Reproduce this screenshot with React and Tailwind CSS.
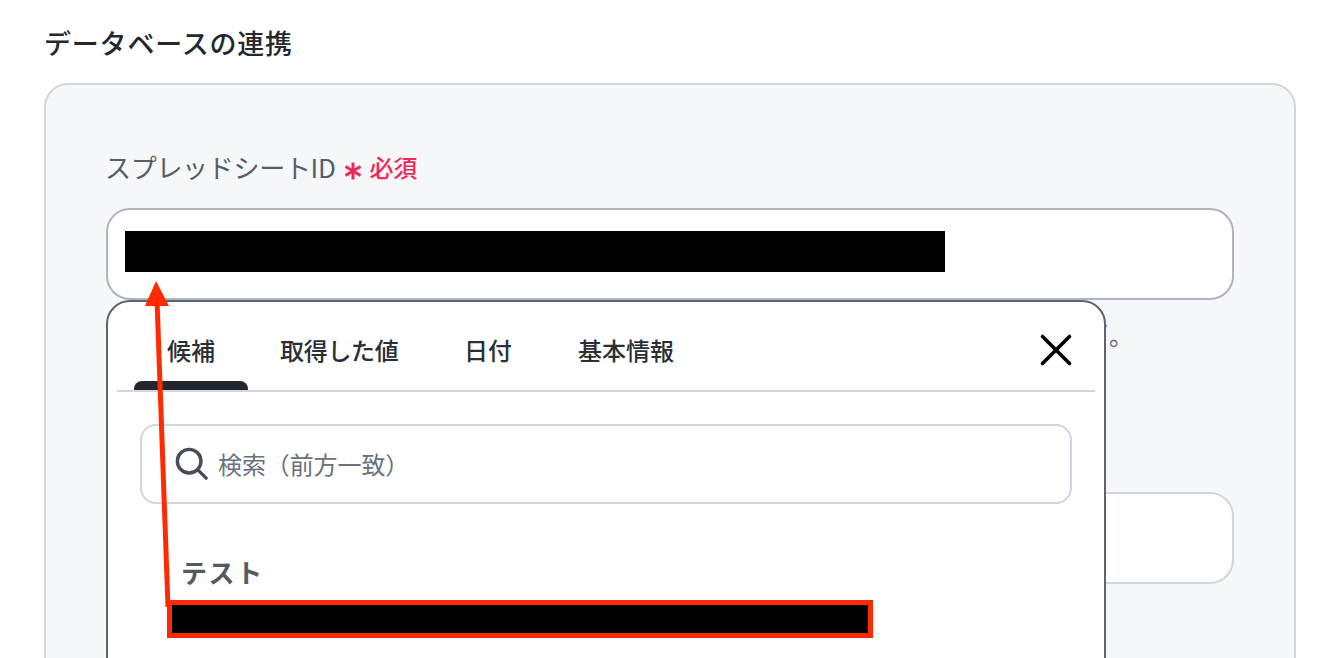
import React from 'react';
import { X } from 'lucide-react';

const font = "font-['Noto_Sans_CJK_JP','Noto_Sans',sans-serif]";

function Tab({ label, active, className }) {
  return (
    <div className={`relative h-[88px] whitespace-nowrap pt-[31px] text-center text-[24px] leading-[34px] font-medium text-[#2a2f36] ${className}`}>
      {label}
      {active && <div className="absolute bottom-0 left-0 right-0 h-[9px] rounded-t-[8px] bg-[#22262e]" />}
    </div>
  );
}

function Picker() {
  return (
    <div className="absolute left-[106px] top-[300px] z-10 h-[420px] w-[1000px] rounded-[24px] border-2 border-[#5b6470] bg-white px-[9px]">
      <div className="flex items-start border-b-2 border-[#d1d5de] pl-[17px]">
        <Tab label="候補" active className="w-[114px]" />
        <Tab label="取得した値" className="ml-[32px] w-[118px] tracking-[-0.3px]" />
        <Tab label="日付" className="ml-[66px] w-[47px]" />
        <Tab label="基本情報" className="ml-[66px] w-[98px]" />
        <button className="ml-auto mr-[12px] mt-[21px] text-black">
          <X size={54} strokeWidth={1.6} />
        </button>
      </div>
      <div className="px-[23px] pt-[32px]">
        <div className="flex h-[80px] items-center rounded-[16px] border-2 border-[#d1d5de] pl-[33px] text-[#69717d]">
          <svg width="34" height="34" viewBox="0 0 36 36" fill="none" stroke="#474d58" strokeWidth="3.6" strokeLinecap="round">
            <circle cx="15" cy="15" r="12.5" />
            <path d="M24.5 24.5 L33 33" />
          </svg>
          <span className="ml-[9px] text-[24px] tracking-[-0.1px]">検索（前方一致）</span>
        </div>
        <div className="pl-[41px] pt-[49px] text-[26px] leading-[38px] font-bold tracking-[1.6px] text-[#555a61]">テスト</div>
      </div>
    </div>
  );
}

export default function App() {
  return (
    <div className={`relative h-[658px] w-[1324px] overflow-hidden bg-white ${font}`}>
      <div className="px-[44px] pt-[24px]">
        <h2 className="text-[27px] leading-[38px] font-medium tracking-[0.8px] text-[#23282f]">データベースの連携</h2>
        <div className="mt-[21px] h-[700px] w-[1252px] rounded-[24px] border-2 border-[#d1d5de] bg-[#f6f7f9] px-[60px] pt-[63px]">
          <div className="flex h-[38px] items-center text-[26px] leading-[36px] tracking-[-0.3px] text-[#555d6a] -ml-[1px]">
            スプレッドシートID
            <svg className="ml-[8px] mt-[8px]" width="18" height="18" viewBox="0 0 18 18" stroke="#f0295b" strokeWidth="3">
              <path d="M9 0.5 V17.5 M1.5 4.5 L16.5 13.5 M16.5 4.5 L1.5 13.5" />
            </svg>
            <span className="ml-[8px] text-[24px] font-medium text-[#f0295b]">必須</span>
          </div>
          <div className="mt-[22px] h-[92px] w-[1128px] rounded-[24px] border-2 border-[#adb5c2] bg-white pl-[17px] pt-[21px]">
            <div className="h-[41px] w-[820px] bg-black" />
          </div>
          <div className="mt-[15px] h-[65px] w-[1128px] pr-[101px] text-right text-[24px] leading-[40px] text-[#5a6270]">
            <span className="inline-block -translate-y-[10px]">ー</span>。
          </div>
          <div className="mt-[112px] h-[92px] w-[1128px] rounded-[24px] border-2 border-[#d1d5de] bg-white" />
        </div>
      </div>

      <Picker />

      {/* 赤枠と矢印の注釈 */}
      <div className="absolute left-[167px] top-[600px] z-20 h-[38px] w-[706px] border-[5px] border-[#ff2a00] bg-black" />
      <svg className="absolute left-0 top-0 z-20" width="1324" height="658" fill="none">
        <path d="M168 607 L157 300" stroke="#ff2a00" strokeWidth="5" />
        <polygon points="156,281 169,306 145,306" fill="#ff2a00" />
      </svg>
    </div>
  );
}
